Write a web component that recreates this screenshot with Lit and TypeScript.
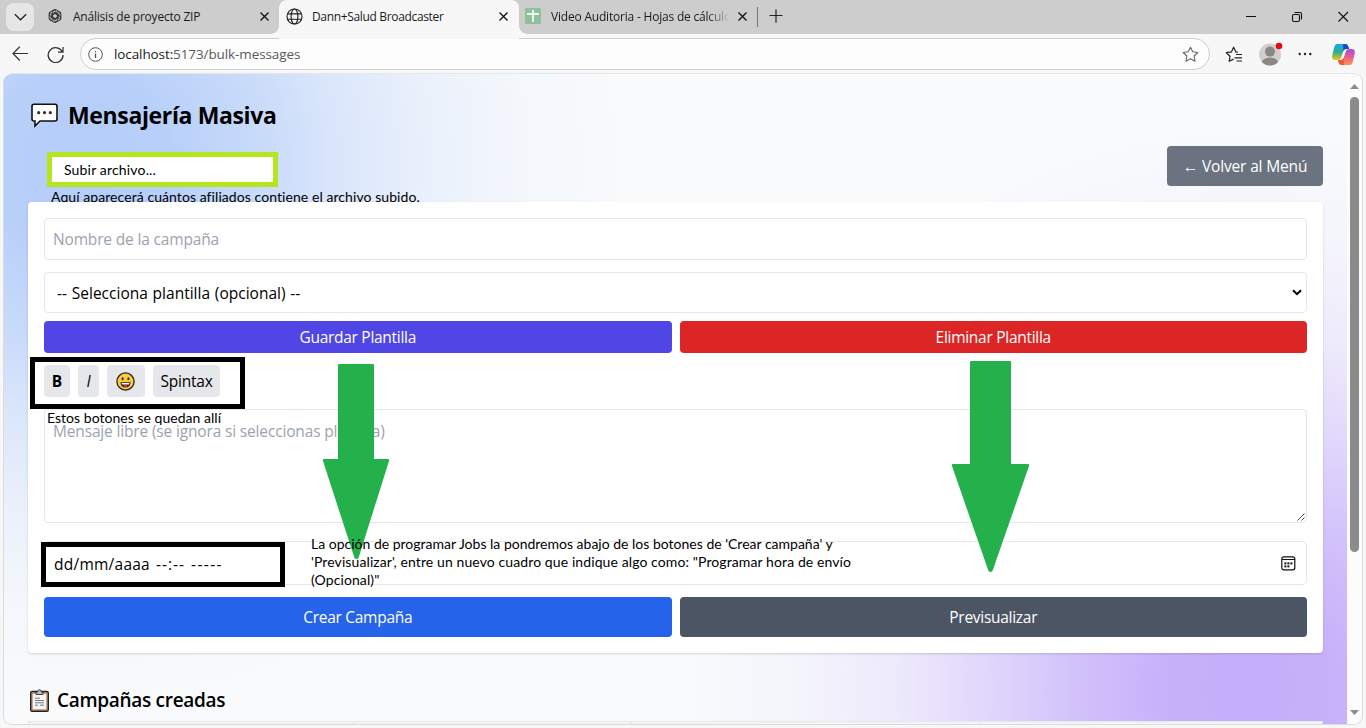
import { LitElement, html, css, svg } from "lit";
import { customElement } from "lit/decorators.js";

const closeX = svg`<path d="M.5.5 8.5 8.5M8.5.5.5 8.5" stroke="#111" stroke-width="1.3" fill="none"/>`;

/** Browser window frame: tab strip and address bar. */
@customElement("browser-chrome")
class BrowserChrome extends LitElement {
  static styles = css`
    :host { display: block; font-family: "Open Sans", "Noto Sans", sans-serif; color: #1b1b1b; }
    svg { display: block; flex: none; }
    .tabs { display: flex; height: 34px; background: #cdcdcd; }
    .menu { width: 28px; height: 28px; margin: 3px 0 0 6px; border-radius: 8px; background: #e6e6e6; display: grid; place-items: center; flex: none; }
    .tab { display: flex; align-items: center; height: 32px; font-size: 12px; box-sizing: border-box; }
    .tab .name { flex: 1; white-space: nowrap; overflow: hidden; }
    .t1 { width: 245px; padding: 0 10.5px 0 14px; letter-spacing: -.22px; }
    .t1 .name { margin-left: 11px; }
    .t2 { width: 240px; height: 39px; padding: 0 11px 7px 7px; background: #f7f7f7; border-radius: 8px 8px 0 0; letter-spacing: -.34px; position: relative; z-index: 1; }
    .t2 .name { margin-left: 9px; }
    .t2::before, .t2::after { content: ""; position: absolute; top: 26px; width: 8px; height: 8px; }
    .t2::before { left: -8px; background: radial-gradient(circle at 0 0, #cdcdcd 7.5px, #f7f7f7 8px); }
    .t2::after { right: -8px; background: radial-gradient(circle at 100% 0, #cdcdcd 7.5px, #f7f7f7 8px); }
    .t3 { width: 238px; padding: 0 10px 0 6px; letter-spacing: -.2px; }
    .t3 .name { margin: 0 10px 0 10px; -webkit-mask-image: linear-gradient(90deg, #000 88%, transparent 101%); }
    .sep { width: 1px; height: 20px; margin-top: 7px; background: #777; }
    .plus { margin: 9px 0 0 10.5px; }
    .win { margin-left: auto; display: flex; align-items: center; }
    .bar { display: flex; align-items: center; height: 40px; background: #f7f7f7; }
    .back { margin-left: 11.5px; }
    .reload { margin-left: 18.500px; }
    .url { display: flex; align-items: center; box-sizing: border-box; width: 1130px; height: 32px; margin-left: 16px; border: 1px solid #cfcfcf; border-radius: 16px; background: #fdfdfd; padding: 0 10px 0 7px; }
    .addr { flex: 1; margin-left: 11px; font-size: 13.5px; letter-spacing: -.1px; color: #1b1b1b; }
    .addr span { color: #5a5a5a; }
    .fav { margin-left: 15px; }
    .user { margin-left: 15px; }
    .dots { margin-left: 14px; }
    .copilot { margin-left: 20px; }
  `;
  render() {
    return html`
      <div class="tabs">
        <div class="menu"><svg width="13" height="8" viewBox="0 0 13 8"><path d="M.8 1.2 6.5 6.8 12.2 1.2" fill="none" stroke="#222" stroke-width="1.3"/></svg></div>
        <div class="tab t1">
          <svg width="14" height="14" viewBox="-7 -7 14 14" fill="none" stroke="#2c2c2c" stroke-width="1">
            ${[0, 60, 120, 180, 240, 300].map((a) => svg`<path transform="rotate(${a})" d="M-2.3-3.4V-4.2A2.4 2.4 0 0 1 1.2-6.1L3.9-4.5A2.5 2.5 0 0 1 5.1-2.2M-2.3-3.4V1.1M-2.3-2.4 1-4.3"/>`)}
          </svg>
          <span class="name">Análisis de proyecto ZIP</span>
          <svg width="9" height="9">${closeX}</svg>
        </div>
        <div class="tab t2">
          <svg width="17" height="17" viewBox="0 0 17 17" fill="none" stroke="#222" stroke-width="1.15"><circle cx="8.5" cy="8.5" r="7.5"/><ellipse cx="8.5" cy="8.5" rx="3.4" ry="7.5"/><path d="M1.8 5.8H15.2M1.8 11.2H15.2"/></svg>
          <span class="name">Dann+Salud Broadcaster</span>
          <svg width="9" height="9">${closeX}</svg>
        </div>
        <div class="tab t3">
          <svg width="16" height="16"><rect width="16" height="16" rx="1.5" fill="#8fc09c"/><path d="M2 6H14M8 2V14" stroke="#eef6f0" stroke-width="2"/></svg>
          <span class="name">Video Auditoria - Hojas de cálculo</span>
          <svg width="9" height="9">${closeX}</svg>
        </div>
        <div class="sep"></div>
        <svg class="plus" width="14" height="14"><path d="M7 .5V13.5M.5 6.5H13.5" stroke="#222" stroke-width="1.2"/></svg>
        <div class="win">
          <svg width="120" height="34" fill="none" stroke="#111" stroke-width="1.1"><path d="M0 16.5H10M92.500 12 102 21.5M102 12 92.500 21.5"/><rect x="46.5" y="14.5" width="7" height="7" rx="1.5"/><path d="M48.5 12.5H54Q55.5 12.5 55.5 14V19.5"/></svg>
        </div>
      </div>
      <div class="bar">
        <svg class="back" width="17" height="16" fill="none" stroke="#333" stroke-width="1.2"><path d="M.8 7.5H16M7.8.8 1 7.5 7.8 14.5"/></svg>
        <svg class="reload" width="17" height="17" fill="none" stroke="#333" stroke-width="1.3"><path d="M15.4 6.2A7.4 7.4 0 1 0 16 9M16 1V6.2H11"/></svg>
        <div class="url">
          <svg width="15" height="15" fill="none" stroke="#555" stroke-width="1"><circle cx="7.5" cy="7.5" r="6.8"/><path d="M7.5 6.6V11M7.5 4V5.3" stroke-width="1.3"/></svg>
          <div class="addr">localhost:<span>5173/bulk-messages</span></div>
          <svg width="17" height="17" viewBox="0 0 17 17"><path d="M8.5 1.2 10.7 5.8 15.8 6.5 12.1 10 13 15.2 8.5 12.8 4 15.2 4.9 10 1.2 6.5 6.3 5.8Z" fill="none" stroke="#666" stroke-width="1.1" stroke-linejoin="round"/></svg>
        </div>
        <svg class="fav" width="18" height="17" viewBox="0 0 18 17" fill="none" stroke="#222" stroke-width="1.2"><path d="M8.6 13.1 4.2 15.3 5 10.3 1.3 6.7 6.4 5.9 8.6 1.2 10.8 5.9 13 6.2M11 8.5H17M9.5 11.8H17M11.5 15H17" stroke-linejoin="round"/></svg>
        <svg class="user" width="26" height="24" viewBox="0 0 26 24"><defs><clipPath id="c"><circle cx="12" cy="12.5" r="11"/></clipPath></defs><circle cx="12" cy="12.5" r="11" fill="#d2d0ce"/><g clip-path="url(#c)" fill="#8a8886"><circle cx="12" cy="9.6" r="5"/><ellipse cx="12" cy="20.8" rx="8.2" ry="5.3"/></g><circle cx="21" cy="4" r="3.3" fill="#e30b0b"/></svg>
        <svg class="dots" width="14" height="4" fill="#222"><circle cx="1.7" cy="2" r="1.2"/><circle cx="7" cy="2" r="1.2"/><circle cx="12.3" cy="2" r="1.2"/></svg>
        <svg class="copilot" width="23" height="21" viewBox="0 0 23 21">
          <defs>
            <linearGradient id="a" x1="0" y1="0" x2="0" y2="1"><stop offset="0" stop-color="#1aa7ee"/><stop offset=".5" stop-color="#2fae8c"/><stop offset="1" stop-color="#f0c419"/></linearGradient>
            <linearGradient id="b" x1="0" y1="0" x2="0" y2="1"><stop offset="0" stop-color="#a24be8"/><stop offset=".5" stop-color="#ee5a8c"/><stop offset="1" stop-color="#fb9a4b"/></linearGradient>
          </defs>
          <path d="M5 0H13.5Q15.5 0 16.3 2.5L17 5H14Q12 5 11.2 7.5L9 14Q8 16 6 16H3Q-.8 16 .4 11L2 4Q3 0 5 0Z" fill="url(#a)"/>
          <path d="M11 0H13.8Q15.6 0 16.3 2.5L17 5H13.6Q12 5 11.5 7Z" fill="#1749c9"/>
          <path d="M18 21H9.5Q7.5 21 6.7 18.5L6 16H9Q11 16 11.8 13.5L14 7Q15 5 17 5H19.5Q23.8 5 22.6 10L21 17Q20 21 18 21Z" fill="url(#b)"/>
          <path d="M12 21H9.3Q7.5 21 6.7 18.5L6 16H9.2Q10.8 16 11.5 14Z" fill="#ef5a2e"/>
          <path d="M11.500 7.200 13.700 6.200 11.500 13.200 9.300 14.500Z" fill="#f7f7f7"/>
        </svg>
      </div>`;
  }
}

/** Campaign form page shown inside the window. */
@customElement("bulk-messages")
class BulkMessages extends LitElement {
  static styles = css`
    :host { display: block; box-sizing: border-box; padding: 24px; color: #000; font: 15.5px/24px "Open Sans", "Noto Sans", sans-serif; }
    svg { display: block; flex: none; }
    h1, h2 { margin: 0; display: flex; align-items: center; }
    h1 { height: 32px; padding-left: 3px; font-size: 23px; font-weight: 700; letter-spacing: -.36px; gap: 10px; margin-top: 1px; }
    h2 { height: 28px; margin-top: 33px; padding-left: 2px; font-size: 19px; font-weight: 600; letter-spacing: -.3px; gap: 8px; }
    .top { display: flex; justify-content: flex-end; margin: 15px 0 16px; }
    .btn { display: flex; align-items: center; justify-content: center; height: 40px; border-radius: 4px; color: #fff; flex: 1; letter-spacing: -.28px; }
    .menu { flex: none; width: 156px; background: #6b7280; letter-spacing: -.15px; }
    .card { position: relative; z-index: 1; background: #fff; border-radius: 4px; padding: 16px; height: 451px; box-sizing: border-box; box-shadow: 0 1px 3px rgba(0,0,0,.1), 0 1px 2px rgba(0,0,0,.06); }
    .field { box-sizing: border-box; border: 1px solid #e5e7eb; border-radius: 4px; display: flex; align-items: center; padding: 0 8px; }
    .hint { color: #9ca3af; letter-spacing: -.16px; }
    .name { height: 42px; }
    .select { height: 41px; margin-top: 12px; padding: 0 4px 0 12px; justify-content: space-between; }
    .select span { word-spacing: .7px; letter-spacing: .01px; }
    .row { display: flex; gap: 8px; margin-top: 8px; }
    .row .btn { height: 32px; }
    .save { background: #4f46e5; }
    .del { background: #dc2626; }
    .tools { display: flex; gap: 8px; margin-top: 12px; }
    .tool { height: 32px; display: grid; place-items: center; border-radius: 4px; background: #e5e7eb; }
    .b { width: 26px; font-weight: 700; }
    .i { width: 21px; font-style: italic; }
    .e { width: 38px; padding-right: 1px; box-sizing: border-box; }
    .s { width: 67px; letter-spacing: -.22px; }
    .msg { height: 114px; margin-top: 12px; align-items: flex-start; padding-top: 9px; position: relative; }
    .grip { position: absolute; right: 1px; bottom: 1px; }
    .date { height: 44px; margin-top: 18px; padding: 0 10.5px 0 9px; justify-content: space-between; }
    .dt { display: flex; gap: 6px; padding-top: 1px; letter-spacing: .25px; }
    .dt .dash { letter-spacing: 1px; }
    .dt .long { letter-spacing: 1.4px; }
    .row.go { margin-top: 12px; }
    .row.go .btn { height: 40px; }
    .create { background: #2563eb; }
    .preview { background: #4b5563; }
    .table { display: flex; height: 20px; box-sizing: border-box; margin-top: 7px; border: 1px solid #e5e7eb; background: #f3f4f6; }
    .table i { border-right: 1px solid #e0e2e6; width: 324px; }
    .table i + i { width: 277px; }
    .table i + i + i { width: 347px; }
  `;
  render() {
    return html`
      <h1>
        <svg width="27" height="25" viewBox="0 0 27 25"><path d="M3 1.2H24Q26 1.2 26 3.2V16Q26 18 24 18H9L4 23V18H3Q1 18 1 16V3.2Q1 1.2 3 1.2Z" fill="#fff" stroke="#111" stroke-width="1.6"/><g fill="#333"><circle cx="7.7" cy="9.7" r="1.6"/><circle cx="13.5" cy="9.7" r="1.6"/><circle cx="19.3" cy="9.7" r="1.6"/></g></svg>
        <span>Mensajería Masiva</span>
      </h1>
      <div class="top"><div class="btn menu">← Volver al Menú</div></div>
      <div class="card">
        <div class="field name hint">Nombre de la campaña</div>
        <div class="field select"><span>-- Selecciona plantilla (opcional) --</span>
          <svg width="10" height="7"><path d="M1 1.2 5 5.2 9 1.2" fill="none" stroke="#000" stroke-width="2"/></svg></div>
        <div class="row"><div class="btn save">Guardar Plantilla</div><div class="btn del">Eliminar Plantilla</div></div>
        <div class="tools">
          <div class="tool b">B</div><div class="tool i">I</div>
          <div class="tool e"><svg width="19" height="19" viewBox="0 0 19 19"><circle cx="9.5" cy="9.5" r="8.6" fill="#ffc83d" stroke="#222" stroke-width="1.3"/><ellipse cx="6.6" cy="6.8" rx="1" ry="1.5" fill="#222"/><ellipse cx="12.4" cy="6.8" rx="1" ry="1.5" fill="#222"/><path d="M4.4 10.2H14.6Q14 15.6 9.5 15.6T4.4 10.2Z" fill="#222"/><path d="M5.6 10.9H13.4L13 12.5H6Z" fill="#fff"/><ellipse cx="9.5" cy="14.1" rx="2" ry="1" fill="#e8352e"/></svg></div>
          <div class="tool s">Spintax</div>
        </div>
        <div class="field msg hint">Mensaje libre (se ignora si seleccionas plantilla)
          <svg class="grip" width="8" height="8"><path d="M.5 7.5 7.5.5M4.5 7.5 7.5 4.5" stroke="#555" stroke-width="1"/></svg></div>
        <div class="field date"><div class="dt"><span>dd/mm/aaaa</span><span class="dash">--:--</span><span class="long">-----</span></div>
          <svg width="15" height="15" viewBox="0 0 15 15"><rect x=".8" y=".8" width="13" height="13" rx="2" fill="none" stroke="#111" stroke-width="1.2"/><path d="M1 3.5H14" stroke="#111" stroke-width="1.1"/><g fill="#111"><rect x="3.4" y="6.4" width="2" height="2"/><rect x="6.4" y="6.4" width="2" height="2"/><rect x="9.4" y="6.4" width="2" height="2"/><rect x="3.4" y="9.4" width="2" height="2"/><rect x="6.4" y="9.4" width="2" height="2"/></g></svg></div>
        <div class="row go"><div class="btn create">Crear Campaña</div><div class="btn preview">Previsualizar</div></div>
      </div>
      <h2>
        <svg width="19" height="23" viewBox="0 0 19 23"><rect x=".6" y="2.4" width="17.8" height="20" rx="1.6" fill="#a07a5c" stroke="#222" stroke-width="1.2"/><rect x="2.600" y="4.6" width="13.800" height="15.8" fill="#f4f4f4"/><path d="M6 3.2H7.4Q7.6.8 9.5.8T11.6 3.2H13V5.5H6Z" fill="#bbb" stroke="#333" stroke-width=".9"/><path d="M5 9.2H10M5 11.5H14M5 13.8H14M5 16.2H8M10 16.2H14" stroke="#777" stroke-width="1"/></svg>
        <span>Campañas creadas</span>
      </h2>
      <div class="table"><i></i><i></i><i></i></div>`;
  }
}

@customElement("app-root")
class AppRoot extends LitElement {
  static styles = css`
    :host { display: block; position: relative; width: 1366px; height: 728px; overflow: hidden; background: #f7f7f7; }
    .view { display: flex; box-sizing: border-box; width: 1360px; height: 652px; margin: -1px 0 0 3px; border: 1px solid #dcdcdc; border-top-color: #e6e6e6; border-radius: 9px; overflow: hidden; background: #fcfcfc; }
    bulk-messages { width: 1343px; height: 700px; flex: none;
      background:
        radial-gradient(circle 540px at 76px 88px, rgba(180,205,249,1) 0, rgba(180,205,249,.95) 16%, rgba(180,205,249,.72) 32%, rgba(180,205,249,.46) 47%, rgba(180,205,249,.2) 65%, rgba(180,205,249,.05) 84%, rgba(180,205,249,0) 100%),
        radial-gradient(circle 560px at 1245px 616px, rgba(197,174,250,1) 0, rgba(197,174,250,.96) 15%, rgba(197,174,250,.74) 31%, rgba(197,174,250,.47) 46%, rgba(197,174,250,.2) 64%, rgba(197,174,250,.06) 83%, rgba(197,174,250,0) 100%),
        #f8fafc; }
    .scroll { flex: 1; display: flex; flex-direction: column; align-items: center; padding: 10px 0 9px; }
    .thumb { width: 9px; height: 455px; margin: 8px 0 auto; border-radius: 5px; background: #8b8b8b; }
    .note { position: absolute; z-index: 2; color: #000; font: 14px/18px Lato, "Open Sans", sans-serif; white-space: nowrap; letter-spacing: .07px; }
    .under { z-index: 0; left: 51px; top: 188px; height: 14px; overflow: hidden; }
    .stay { left: 47px; top: 409px; letter-spacing: .03px; }
    .plan { left: 311px; top: 535px; display: grid; letter-spacing: .1px; }
    .plan .l1 { letter-spacing: 0; }
    .upload { left: 47px; top: 152px; width: 231px; height: 35px; box-sizing: border-box; border: 5px solid #b5e61d; background: #fff; padding: 4px 12px; letter-spacing: .17px; }
    .frame { position: absolute; z-index: 2; border: 5px solid #000; box-sizing: border-box; }
    .f1 { left: 30px; top: 357px; width: 215px; height: 52px; }
    .f2 { left: 41px; top: 542px; width: 244px; height: 45px; }
    .arrow { position: absolute; z-index: 1; display: block; }
    .a1 { left: 322px; top: 363px; }
    .a2 { left: 951px; top: 360px; }
  `;
  render() {
    const fill = "#24b14c";
    return html`
      <browser-chrome></browser-chrome>
      <div class="view">
        <bulk-messages></bulk-messages>
        <div class="scroll">
          <svg width="9" height="5"><path d="M4.5 0 9 5H0Z" fill="#8b8b8b"/></svg>
          <div class="thumb"></div>
          <svg width="9" height="5"><path d="M4.5 5 9 0H0Z" fill="#8b8b8b"/></svg>
        </div>
      </div>
      <div class="note under">Aquí aparecerá cuántos afiliados contiene el archivo subido.</div>
      <div class="note upload">Subir archivo...</div>
      <svg class="arrow a1" width="68" height="197"><path d="M17 1H51Q52 1 52 2V96H66Q67.5 96 67 98L36.5 195Q34.5 197 32.5 195L1 98Q.5 96 2 96H16V2Q16 1 17 1Z" fill="${fill}"/></svg>
      <svg class="arrow a2" width="79" height="213"><path d="M20 1H59Q60 1 60 2V104H77Q78.5 104 78 106L41.5 211Q39.5 213 37.5 211L1 106Q.5 104 2 104H19V2Q19 1 20 1Z" fill="${fill}"/></svg>
      <div class="frame f1"></div>
      <div class="frame f2"></div>
      <div class="note stay">Estos botones se quedan allí</div>
      <div class="note plan">
        <span class="l1">La opción de programar Jobs la pondremos abajo de los botones de 'Crear campaña' y</span>
        <span>'Previsualizar', entre un nuevo cuadro que indique algo como: "Programar hora de envío</span>
        <span>(Opcional)"</span>
      </div>`;
  }
}
